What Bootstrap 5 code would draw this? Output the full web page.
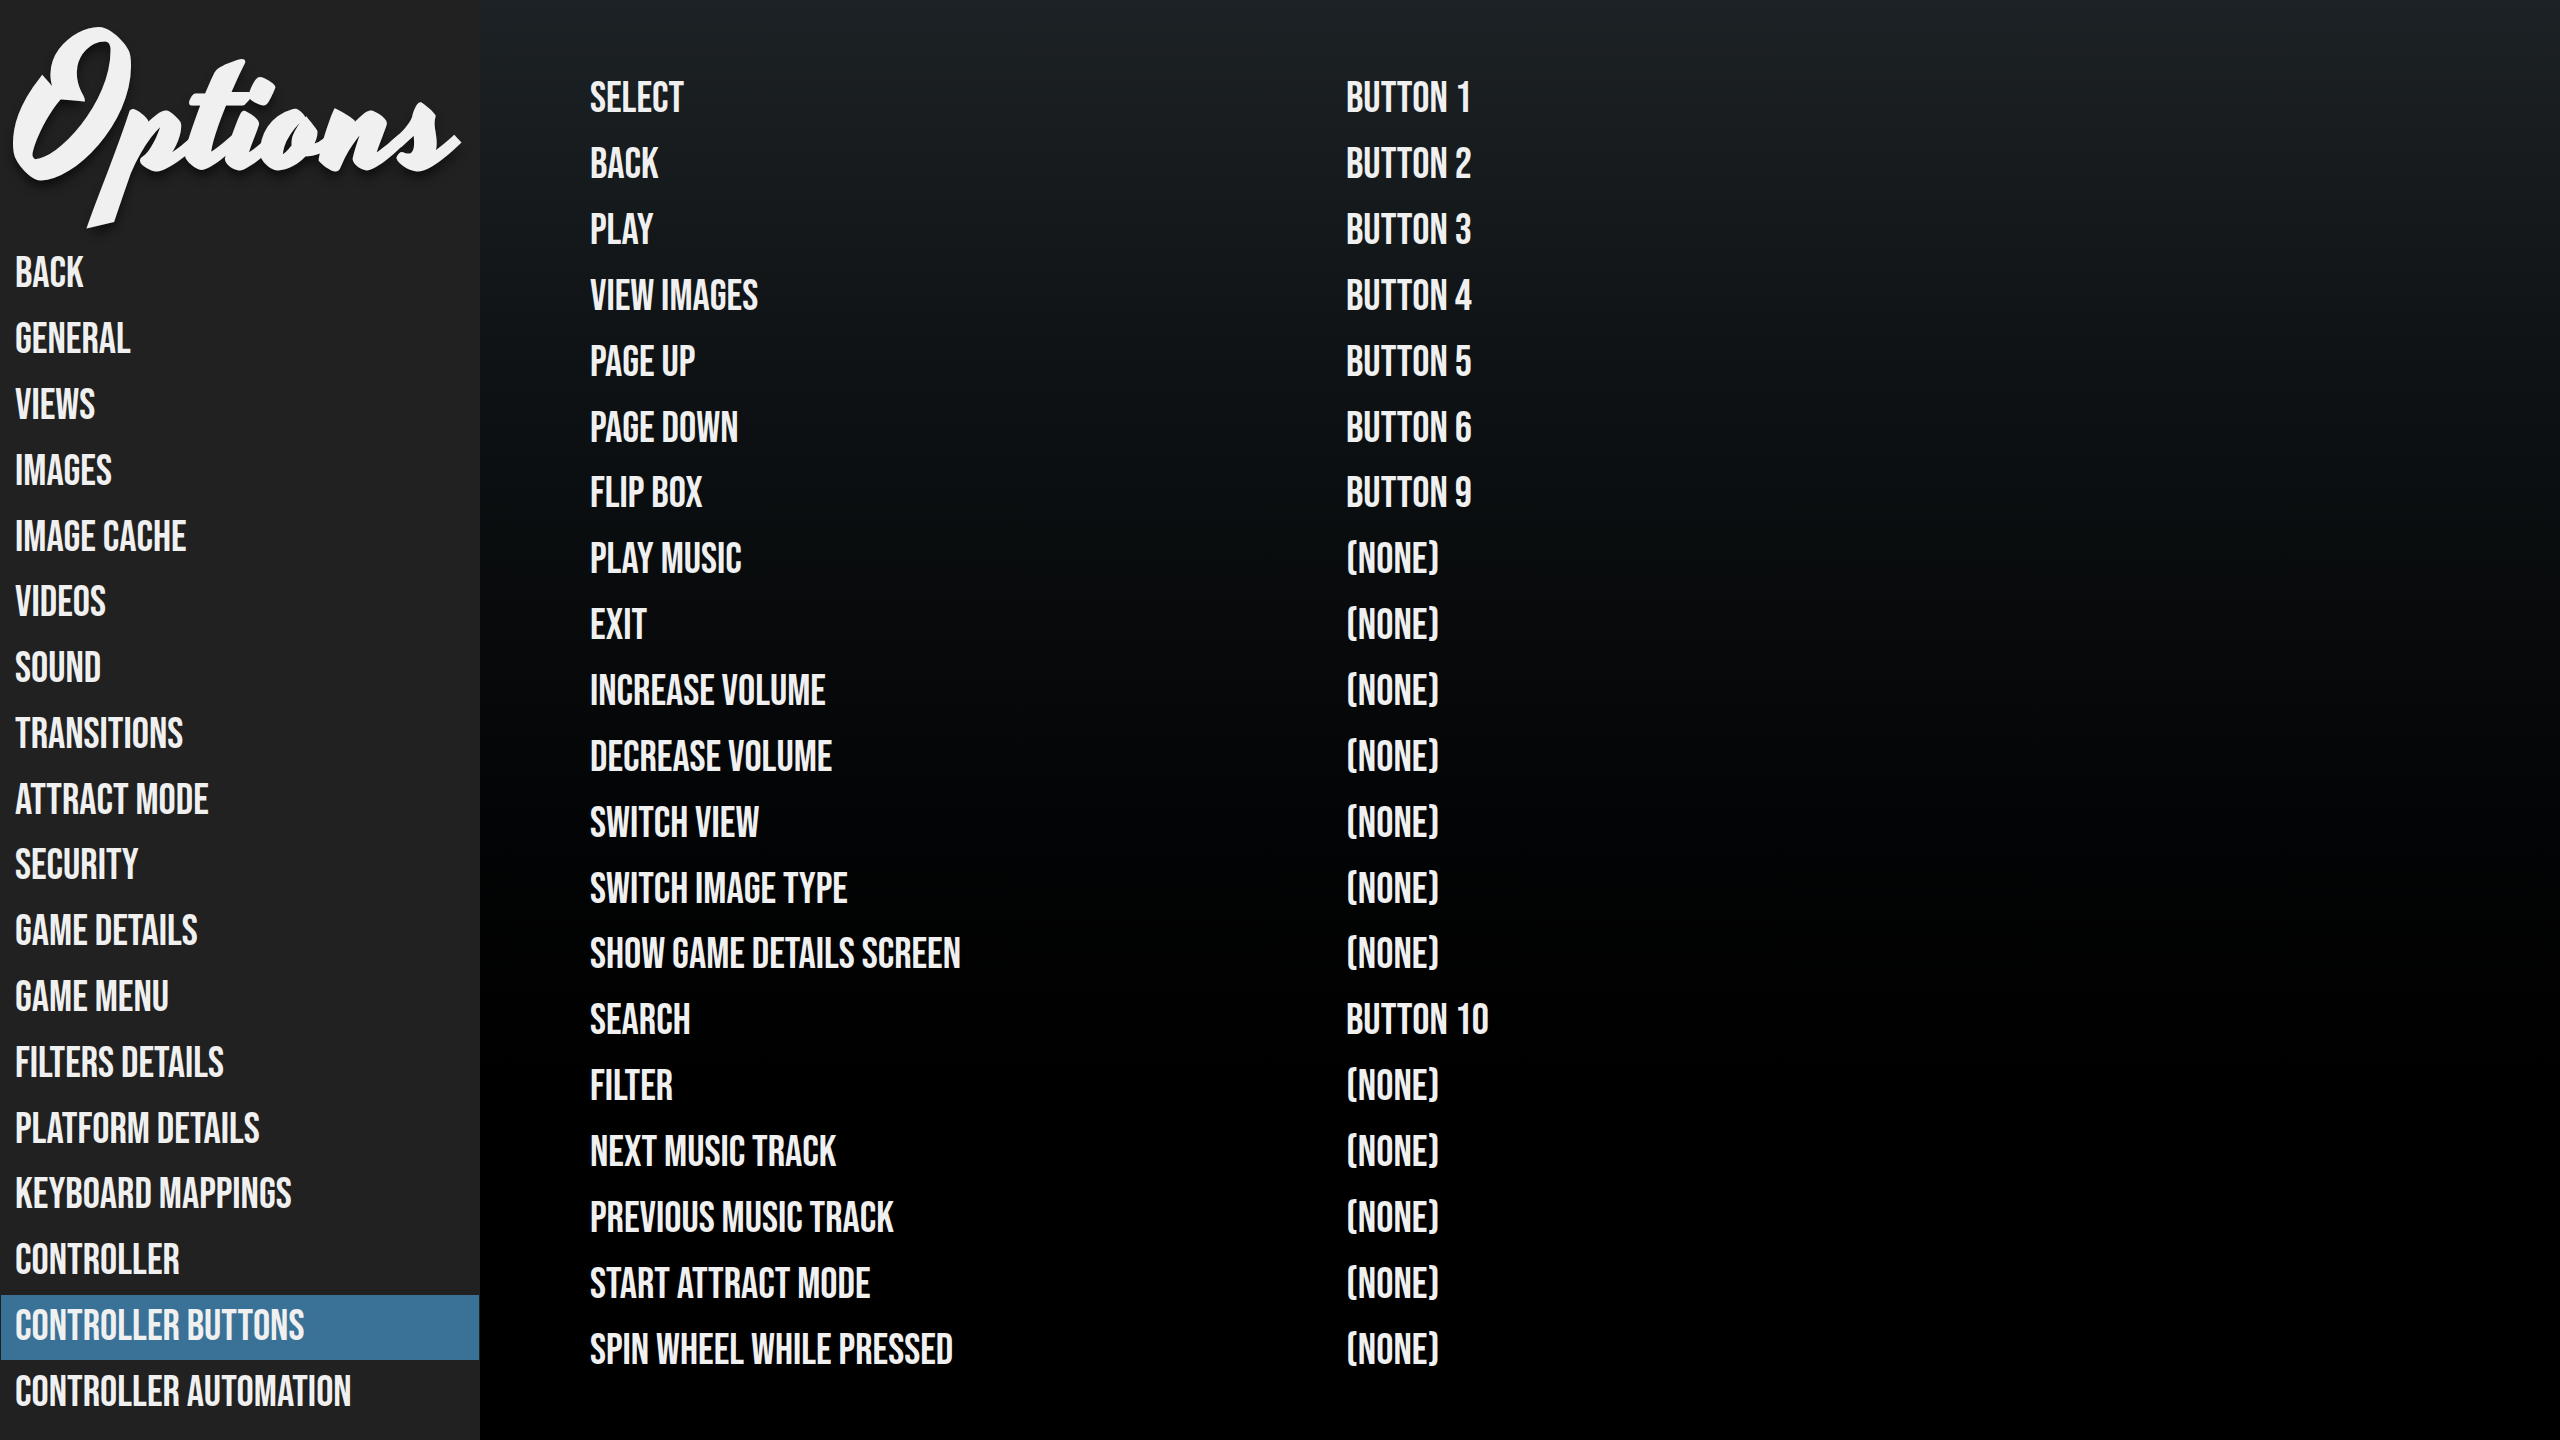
<!DOCTYPE html>
<html lang="en">
<head>
<meta charset="utf-8">
<meta name="viewport" content="width=device-width, initial-scale=1">
<title>Options</title>
<link href="https://cdn.jsdelivr.net/npm/bootstrap@5.3.0/dist/css/bootstrap.min.css" rel="stylesheet">
<style>
  body {
    background: #000;
    color: #f0f0f0;
    font: 400 43px/1 "Bebas Neue", "Open Sans Condensed", "Liberation Sans", sans-serif;
  }
  .options-sidebar {
    width: 480px;
    background: #212121;
    padding-bottom: 14px;
  }
  .options-title {
    height: 242px;
    margin: 0;
    padding-left: 18px;
    font: 400 176px/240px "Yesteryear", "Liberation Serif", cursive;
    -webkit-text-stroke: 5px #f0f0f0;
    text-shadow: 0 8px 12px rgba(0, 0, 0, .7);
  }
  .options-menu { padding: 0 1px; }
  .options-menu .nav-link {
    flex: 1 1 0;
    display: flex;
    align-items: center;
    padding: 0 14px;
    color: inherit;
    white-space: nowrap;
  }
  .options-menu .nav-link.active { background: #3a7196; }
  .options-panel {
    background: linear-gradient(#1d2226 0%, #0e1214 26%, #030405 57%, #000 76%);
    padding: 67px 80px 56px 110px;
  }
  .mapping-table {
    height: calc(100vh - 123px);
    table-layout: fixed;
  }
  .mapping-table th, .mapping-table td {
    padding: 0;
    font-weight: 400;
    text-align: left;
    vertical-align: middle;
  }
  .mapping-table th { width: 40%; }
</style>
<script src="https://cdn.jsdelivr.net/npm/bootstrap@5.3.0/dist/js/bootstrap.bundle.min.js"></script>
</head>
<body>
<div class="d-flex min-vh-100">
  <aside class="options-sidebar d-flex flex-column flex-shrink-0">
    <h1 class="options-title">Options</h1>
    <nav class="options-menu nav flex-column flex-nowrap flex-grow-1" aria-label="Options">
      <a class="nav-link" href="#">Back</a>
      <a class="nav-link" href="#">General</a>
      <a class="nav-link" href="#">Views</a>
      <a class="nav-link" href="#">Images</a>
      <a class="nav-link" href="#">Image Cache</a>
      <a class="nav-link" href="#">Videos</a>
      <a class="nav-link" href="#">Sound</a>
      <a class="nav-link" href="#">Transitions</a>
      <a class="nav-link" href="#">Attract Mode</a>
      <a class="nav-link" href="#">Security</a>
      <a class="nav-link" href="#">Game Details</a>
      <a class="nav-link" href="#">Game Menu</a>
      <a class="nav-link" href="#">Filters Details</a>
      <a class="nav-link" href="#">Platform Details</a>
      <a class="nav-link" href="#">Keyboard Mappings</a>
      <a class="nav-link" href="#">Controller</a>
      <a class="nav-link active" href="#" aria-current="page">Controller Buttons</a>
      <a class="nav-link" href="#">Controller Automation</a>
    </nav>
  </aside>
  <main class="options-panel flex-grow-1">
    <table class="mapping-table w-100">
      <tbody>
        <tr><th scope="row">Select</th><td>Button 1</td></tr>
        <tr><th scope="row">Back</th><td>Button 2</td></tr>
        <tr><th scope="row">Play</th><td>Button 3</td></tr>
        <tr><th scope="row">View Images</th><td>Button 4</td></tr>
        <tr><th scope="row">Page Up</th><td>Button 5</td></tr>
        <tr><th scope="row">Page Down</th><td>Button 6</td></tr>
        <tr><th scope="row">Flip Box</th><td>Button 9</td></tr>
        <tr><th scope="row">Play Music</th><td>(None)</td></tr>
        <tr><th scope="row">Exit</th><td>(None)</td></tr>
        <tr><th scope="row">Increase Volume</th><td>(None)</td></tr>
        <tr><th scope="row">Decrease Volume</th><td>(None)</td></tr>
        <tr><th scope="row">Switch View</th><td>(None)</td></tr>
        <tr><th scope="row">Switch Image Type</th><td>(None)</td></tr>
        <tr><th scope="row">Show Game Details Screen</th><td>(None)</td></tr>
        <tr><th scope="row">Search</th><td>Button 10</td></tr>
        <tr><th scope="row">Filter</th><td>(None)</td></tr>
        <tr><th scope="row">Next Music Track</th><td>(None)</td></tr>
        <tr><th scope="row">Previous Music Track</th><td>(None)</td></tr>
        <tr><th scope="row">Start Attract Mode</th><td>(None)</td></tr>
        <tr><th scope="row">Spin Wheel While Pressed</th><td>(None)</td></tr>
      </tbody>
    </table>
  </main>
</div>
</body>
</html>
